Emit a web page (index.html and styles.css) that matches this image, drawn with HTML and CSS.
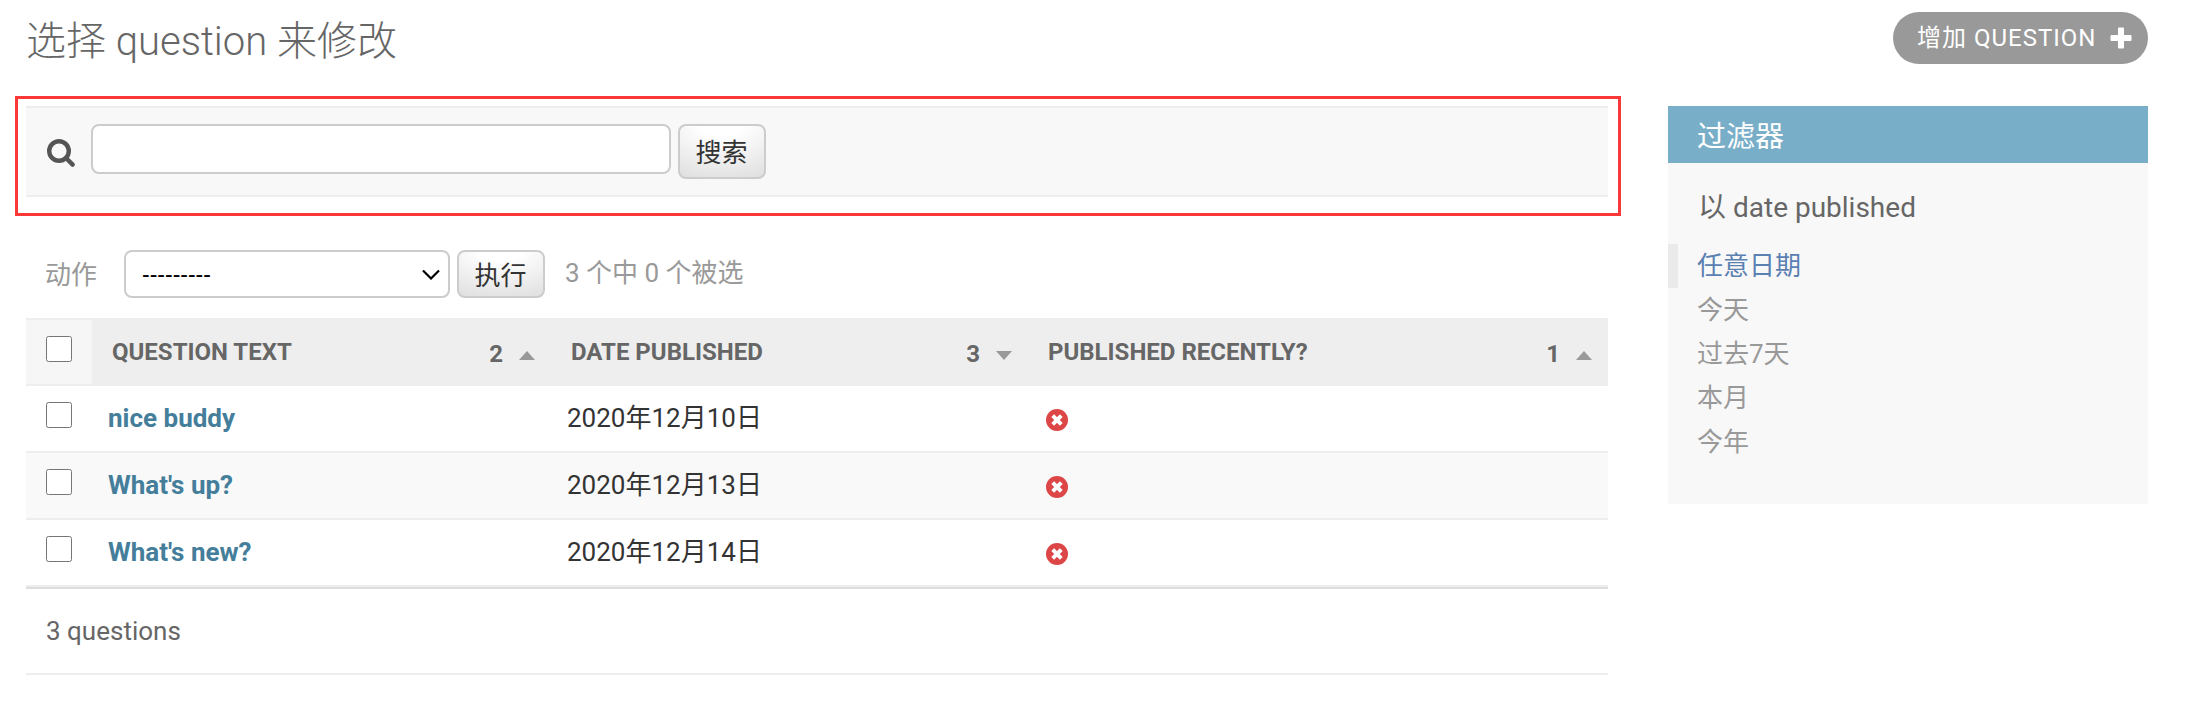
FILE: index.html
```html
<!DOCTYPE html>
<html lang="zh-Hans">
<head>
<meta charset="utf-8">
<title>选择 question 来修改</title>
<link rel="stylesheet" href="styles.css">
</head>
<body>
<div class="content">
  <header class="page-head">
    <h1>选择 question 来修改</h1>
    <a class="addlink"><span>增加 QUESTION</span><svg class="plus" viewBox="0 0 22 22"><path d="M9 0.5h4q1 0 1 1V8h6.500q1 0 1 1v4q0 1-1 1H14v6.500q0 1-1 1H9q-1 0-1-1V14H1.500q-1 0-1-1V9q0-1 1-1H8V1.500q0-1 1-1z"/></svg></a>
  </header>
  <div class="columns">
    <main class="changelist">
      <form class="toolbar">
        <svg class="search-icon" viewBox="0 0 28 28"><circle cx="12" cy="12" r="9.800"/><path d="M19 19l6.600 6.600"/></svg>
        <input class="searchbar" type="text">
        <button class="button" type="button">搜索</button>
      </form>
      <div class="actions">
        <label>动作</label>
        <div class="select"><span>---------</span><svg viewBox="0 0 18 11"><path d="M1 1.500l8 8 8-8"/></svg></div>
        <button class="button" type="button">执行</button>
        <span class="counter">3 个中 0 个被选</span>
      </div>
      <div class="results">
        <div class="row head">
          <div class="check"><input type="checkbox"></div>
          <div class="th"><span>QUESTION TEXT</span><span class="sort">2<i class="up"></i></span></div>
          <div class="th"><span>DATE PUBLISHED</span><span class="sort">3<i class="down"></i></span></div>
          <div class="th"><span>PUBLISHED RECENTLY?</span><span class="sort">1<i class="up"></i></span></div>
        </div>
        <div class="row">
          <div class="check"><input type="checkbox"></div>
          <div class="td name">nice buddy</div>
          <div class="td">2020年12月10日</div>
          <div class="td"><svg class="no" viewBox="0 0 22 22"><circle cx="11" cy="11" r="11"/><path d="M6.700 6.700l8.600 8.600M15.300 6.700l-8.600 8.600"/></svg></div>
        </div>
        <div class="row alt">
          <div class="check"><input type="checkbox"></div>
          <div class="td name">What's up?</div>
          <div class="td">2020年12月13日</div>
          <div class="td"><svg class="no" viewBox="0 0 22 22"><circle cx="11" cy="11" r="11"/><path d="M6.700 6.700l8.600 8.600M15.300 6.700l-8.600 8.600"/></svg></div>
        </div>
        <div class="row">
          <div class="check"><input type="checkbox"></div>
          <div class="td name">What's new?</div>
          <div class="td">2020年12月14日</div>
          <div class="td"><svg class="no" viewBox="0 0 22 22"><circle cx="11" cy="11" r="11"/><path d="M6.700 6.700l8.600 8.600M15.300 6.700l-8.600 8.600"/></svg></div>
        </div>
      </div>
      <p class="paginator">3 questions</p>
    </main>
    <aside class="filter">
      <h2>过滤器</h2>
      <h3>以 date published</h3>
      <ul>
        <li class="selected">任意日期</li>
        <li>今天</li>
        <li>过去7天</li>
        <li>本月</li>
        <li>今年</li>
      </ul>
    </aside>
  </div>
</div>
</body>
</html>
```
FILE: styles.css
```css
* { box-sizing: border-box; }
body {
  margin: 0;
  background: #fff;
  color: #333;
  font: 26px/34px Roboto, "Noto Sans CJK SC", sans-serif;
}
h1, h2, h3, ul, p { margin: 0; padding: 0; }
.content { padding: 0 58px 0 26px; }

.page-head {
  display: flex;
  justify-content: space-between;
  align-items: flex-start;
  height: 106px;
}
h1 { padding-top: 18px; font-size: 40px; line-height: 48px; font-weight: 300; color: #666; }
.addlink {
  display: flex;
  align-items: center;
  justify-content: space-between;
  width: 255px;
  height: 52px;
  margin-top: 12px;
  padding: 0 16px 0 24px;
  border-radius: 26px;
  background: #999;
  color: #fff;
  font-size: 24px;
  letter-spacing: 1px;
}
.plus { width: 22px; height: 22px; fill: #fff; }

.columns { display: flex; justify-content: space-between; align-items: flex-start; }
.changelist { width: 1582px; }
.toolbar {
  position: relative;
  display: flex;
  align-items: flex-start;
  height: 91px;
  padding: 16px 0 0 21px;
  border: solid #eee;
  border-width: 2px 0;
  background: #f8f8f8;
}
/* highlight frame around the search bar */
.toolbar::after {
  content: "";
  position: absolute;
  inset: -12px -13px -21px -11px;
  border: 3px solid #fb3838;
  pointer-events: none;
}
.search-icon { width: 28px; height: 28px; margin: 15px 16px 0 0; fill: none; stroke: #555; stroke-width: 4.4; stroke-linecap: round; }
.searchbar { width: 580px; height: 50px; margin: 0 7px 0 0; border: 2px solid #ccc; border-radius: 8px; background: #fff; }
.button {
  width: 88px;
  height: 55px;
  padding: 3px 1px 0 0;
  border: 2px solid #ccc;
  border-radius: 8px;
  background: radial-gradient(ellipse 110% 120% at 50% -10%, #fff 25%, #e0e0e0 100%);
  color: #333;
  font: inherit;
}

.actions {
  display: flex;
  align-items: flex-start;
  height: 121px;
  padding: 53px 0 0 19px;
  color: #999;
}
.actions label { width: 79px; padding-top: 8px; }
.select {
  display: flex;
  align-items: center;
  justify-content: space-between;
  width: 326px;
  height: 48px;
  margin-right: 7px;
  padding: 0 8px 0 16px;
  border: 2px solid #ccc;
  border-radius: 8px;
  background: #fff;
  color: #000;
  font-family: "Liberation Sans", sans-serif;
  font-size: 23px;
}
.select svg { width: 18px; height: 11px; fill: none; stroke: #000; stroke-width: 2.2; }
.actions .button { height: 48px; }
.counter { padding: 6px 0 0 20px; }

.results { border-bottom: 2px solid #ddd; }
.row { display: grid; grid-template-columns: 66px 459px 477px 580px; height: 67px; border-bottom: 2px solid #eee; }
.alt { background: #f9f9f9; }
.check { padding: 16px 0 0 20px; line-height: 0; }
.check input { width: 26px; height: 26px; margin: 0; }
.head { height: 68px; border-top: 2px solid #eee; background: #eee; }
.head .check { background: #f6f6f6; }
.th { display: flex; justify-content: space-between; padding: 15px 16px 0 20px; color: #666; font-size: 24px; font-weight: 700; }
.sort { display: flex; padding-top: 2px; }
.sort i { width: 16px; height: 9px; margin: 14px 0 0 16px; background: #999; clip-path: polygon(50% 0, 100% 100%, 0 100%); }
.sort i.down { clip-path: polygon(0 0, 100% 0, 50% 100%); }
.td { padding: 15px 16px 0; }
.name { color: #447e9b; font-weight: 700; }
.no { display: block; width: 22px; height: 22px; margin: 8px 0 0 2px; fill: #dd4646; }
.no path { stroke: #fff; stroke-width: 4; }
.paginator { height: 86px; padding: 25px 20px 0; border-bottom: 2px solid #eee; color: #666; }

.filter { width: 480px; height: 398px; background: #f8f8f8; }
h2 { height: 57px; padding: 3px 29px 0; background: #79aec8; color: #fff; font-size: 29px; line-height: 57px; font-weight: 400; }
h3 { height: 81px; padding: 28px 30px 0; color: #666; font-size: 28px; font-weight: 400; }
ul { list-style: none; }
li { height: 44px; padding-left: 29px; line-height: 45px; color: #999; }
.selected { padding-left: 19px; border-left: 10px solid #eaeaea; color: #5b80b2; }
```
